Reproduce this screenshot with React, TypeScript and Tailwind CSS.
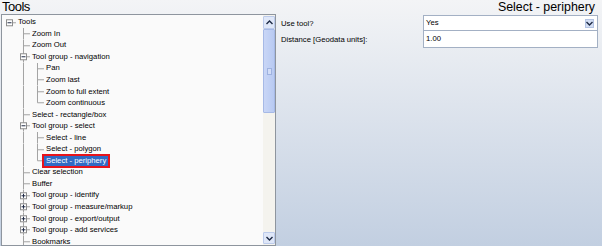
import React from 'react';

type Box = 'minus' | 'plus' | undefined;

interface TreeItem {
  label: string;
  level: number;
  box?: Box;
  last?: boolean;
  selected?: boolean;
}

const ROW_H = 11.56;

const items: TreeItem[] = [
  { label: 'Tools', level: 0, box: 'minus' },
  { label: 'Zoom In', level: 1 },
  { label: 'Zoom Out', level: 1 },
  { label: 'Tool group - navigation', level: 1, box: 'minus' },
  { label: 'Pan', level: 2 },
  { label: 'Zoom last', level: 2 },
  { label: 'Zoom to full extent', level: 2 },
  { label: 'Zoom continuous', level: 2, last: true },
  { label: 'Select - rectangle/box', level: 1 },
  { label: 'Tool group - select', level: 1, box: 'minus' },
  { label: 'Select - line', level: 2 },
  { label: 'Select - polygon', level: 2 },
  { label: 'Select - periphery', level: 2, last: true, selected: true },
  { label: 'Clear selection', level: 1 },
  { label: 'Buffer', level: 1 },
  { label: 'Tool group - identify', level: 1, box: 'plus' },
  { label: 'Tool group - measure/markup', level: 1, box: 'plus' },
  { label: 'Tool group - export/output', level: 1, box: 'plus' },
  { label: 'Tool group - add services', level: 1, box: 'plus' },
  { label: 'Bookmarks', level: 1 },
];

// one 14px indent column of the tree: guide line, connector and +/- box
const TreeCell: React.FC<{ kind: 'empty' | 'pipe' | 'tee' | 'elbow' | 'root'; box?: Box }> = ({ kind, box }) => {
  const mid = ROW_H / 2;
  const line = '#a3a3a3';
  return (
    <svg width={14} height={ROW_H} viewBox={`0 0 14 ${ROW_H}`} className="shrink-0 block">
      {(kind === 'pipe' || kind === 'tee') && <line x1={7.5} y1={0} x2={7.5} y2={ROW_H} stroke={line} strokeWidth={1} />}
      {kind === 'elbow' && <line x1={7.5} y1={0} x2={7.5} y2={mid} stroke={line} strokeWidth={1} />}
      {(kind === 'tee' || kind === 'elbow' || kind === 'root') && (
        <line x1={7.5} y1={mid} x2={14} y2={mid} stroke={line} strokeWidth={1} />
      )}
      {box && (
        <g>
          <rect x={4.5} y={mid - 3} width={6} height={6} fill="#ffffff" stroke="#8c8c8c" strokeWidth={1} />
          <line x1={5.5} y1={mid} x2={9.5} y2={mid} stroke="#1f2a44" strokeWidth={1} />
          {box === 'plus' && <line x1={7.5} y1={mid - 2} x2={7.5} y2={mid + 2} stroke="#1f2a44" strokeWidth={1} />}
        </g>
      )}
    </svg>
  );
};

const Chevron: React.FC<{ up?: boolean }> = ({ up }) => (
  <svg width={7} height={5} viewBox="0 0 7 5" className="block">
    <path
      d={up ? 'M0.5 4 L3.5 1 L6.5 4' : 'M0.5 1 L3.5 4 L6.5 1'}
      fill="none"
      stroke="#1e2b45"
      strokeWidth={1.4}
    />
  </svg>
);

export default function App() {
  return (
    <div className="w-[602px] h-[246px] overflow-hidden bg-linear-to-b from-[#f3f4f6] to-[#c2cfe1] font-['Liberation_Sans',Arial,sans-serif] text-black">
      {/* Title row */}
      <div className="h-[14px] flex items-center justify-between pl-[2px] pr-[7px]">
        <span className="text-[13px] leading-[14px] tracking-[-0.5px]">Tools</span>
        <span className="text-[12.4px] leading-[14px]">Select - periphery</span>
      </div>

      <div className="flex h-[232px]">
        {/* Tree view */}
        <div className="ml-px w-[275px] h-[232px] border border-[#8e959e] bg-[#fafafa] flex">
          <div className="flex-1 overflow-hidden pt-[1.5px] text-[7.7px]">
            {items.map((item) => (
              <div key={item.label} className="flex items-center" style={{ height: ROW_H }}>
                {item.level === 0 && <TreeCell kind="root" box={item.box} />}
                {item.level >= 1 && <TreeCell kind="empty" />}
                {item.level === 1 && <TreeCell kind="tee" box={item.box} />}
                {item.level === 2 && (
                  <>
                    <TreeCell kind="pipe" />
                    <TreeCell kind={item.last ? 'elbow' : 'tee'} />
                  </>
                )}
                <span
                  className={
                    item.selected
                      ? 'px-[2px] leading-[10px] whitespace-nowrap bg-[#316ac5] text-white outline-2 outline-[#e8131b]'
                      : 'px-[2px] leading-[10px] whitespace-nowrap'
                  }
                >
                  {item.label}
                </span>
              </div>
            ))}
          </div>

          {/* Scrollbar */}
          <div className="w-[12px] flex flex-col bg-[#f4f3ee]">
            <div className="h-[13px] mt-px flex items-center justify-center bg-[#dfe7f8] border border-[#bccbeb] rounded-[1px]">
              <Chevron up />
            </div>
            <div className="h-[84px] flex items-center justify-center bg-linear-to-r from-[#c9d6f6] to-[#b8caf2] border border-[#a6b9e6] rounded-[1px]">
              <div className="w-[5px] h-[7px] border border-[#9eb2e0] bg-[#d2ddf7]" />
            </div>
            <div className="flex-1" />
            <div className="h-[12px] mb-px flex items-center justify-center bg-[#dfe7f8] border border-[#bccbeb] rounded-[1px]">
              <Chevron />
            </div>
          </div>
        </div>

        {/* Properties */}
        <div className="flex-1 pt-px">
          <div className="flex text-[7.7px]">
            <div className="w-[147px] pl-[5px] pt-[1px]">
              <div className="h-[16px] leading-[16px]">Use tool?</div>
              <div className="h-[16px] leading-[16px]">Distance [Geodata units]:</div>
            </div>
            <div className="w-[175px] border border-[#a3b0c4] bg-white">
              <div className="h-[15px] flex items-center justify-between pl-[2px] pr-[3px] border-b border-[#a3b0c4]">
                <span>Yes</span>
                <div className="w-[9px] h-[9px] flex items-center justify-center bg-[#d3def4] border border-[#b3c3e3]">
                  <Chevron />
                </div>
              </div>
              <div className="h-[15px] flex items-center pl-[2px]">1.00</div>
            </div>
          </div>
        </div>
      </div>
    </div>
  );
}
